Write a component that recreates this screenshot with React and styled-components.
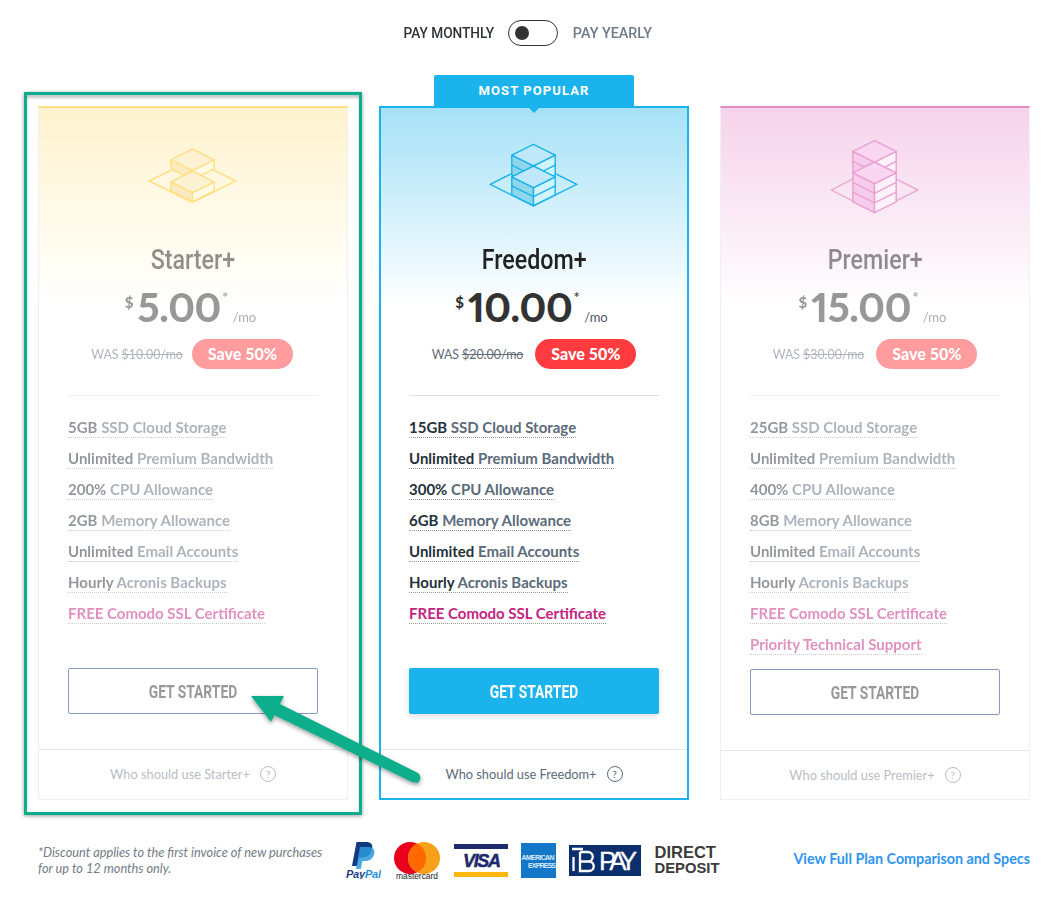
import React from "react";
import styled, { createGlobalStyle } from "styled-components";

const plans = [
  {
    name: "Starter+", price: "5.00", was: "$10.00/mo", accent: "#ffe082", line: "#ffe082", tint: "#fff3cf", icon: "starter", tight: true,
    faces: ["#fdf1d4", "#fbe9c0", "#fff9e8"],
    features: [["5GB", "SSD Cloud Storage"], ["Unlimited", "Premium Bandwidth"], ["200%", "CPU Allowance"], ["2GB", "Memory Allowance"], ["Unlimited", "Email Accounts"], ["Hourly", "Acronis Backups"]],
  },
  {
    name: "Freedom+", price: "10.00", was: "$20.00/mo", accent: "#1ab3ec", line: "#1ab3ec", tint: "#a6e1f7", icon: "freedom", featured: true,
    faces: ["#bfe9fa", "#8fd6ea", "#d2f4fd"],
    features: [["15GB", "SSD Cloud Storage"], ["Unlimited", "Premium Bandwidth"], ["300%", "CPU Allowance"], ["6GB", "Memory Allowance"], ["Unlimited", "Email Accounts"], ["Hourly", "Acronis Backups"]],
  },
  {
    name: "Premier+", price: "15.00", was: "$30.00/mo", accent: "#e58bc6", line: "#e8a0d2", tint: "#f5d3ea", icon: "premier", priority: true,
    faces: ["#fbd6f0", "#f5cdea", "#fff1fb"],
    features: [["25GB", "SSD Cloud Storage"], ["Unlimited", "Premium Bandwidth"], ["400%", "CPU Allowance"], ["8GB", "Memory Allowance"], ["Unlimited", "Email Accounts"], ["Hourly", "Acronis Backups"]],
  },
];

const icons = {
  starter: { plate: [44.5, 41, 21.5], cubes: [[44.5, 9, 9, 1], [44.5, 31, 9, 1]] },
  freedom: { plate: [44.5, 44.3, 21.7], cubes: [[44.5, 4.3, 20, 2], [44.5, 26, 18, 2]] },
  premier: { plate: [44.5, 50, 22], cubes: [[44.5, 0.6, 20, 2], [44.5, 22, 29, 3]] },
};

const GlobalStyle = createGlobalStyle`
  html, body { margin: 0; padding: 0; background: #fff; }
  body { font-family: "Lato", "Liberation Sans", sans-serif; }
`;

const Page = styled.div`
  position: relative;
  width: 1064px;
  height: 912px;
  overflow: hidden;
  background: #fff;
`;

const Toggle = styled.div`
  display: flex;
  justify-content: center;
  align-items: center;
  gap: 14.5px;
  padding: 19px 0 0 0;
  margin-left: -9px;
  height: 27px;
`;

const Narrow = styled.span`
  display: inline-block;
  font-family: "Roboto", sans-serif;
  transform: scaleX(${(p) => p.$scale});
  margin: 0 ${(p) => p.$trim}px;
`;

const ToggleLabel = styled(Narrow)`
  font-size: 15px;
  font-weight: 500;
  color: ${(p) => (p.$off ? "#6f7b88" : "#2e3338")};
`;

const Switch = styled.div`
  width: 50px;
  height: 26px;
  box-sizing: border-box;
  border: 1px solid #333;
  border-radius: 13px;
  padding: 5px 0 0 6px;
`;

const Knob = styled.div`
  width: 14px;
  height: 14px;
  border-radius: 50%;
  background: #333;
`;

const Plans = styled.div`
  display: flex;
  gap: 31px;
  margin: 60px 0 0 38px;
`;

const Card = styled.div`
  position: relative;
  width: 310px;
  height: 694px;
  box-sizing: border-box;
  display: flex;
  flex-direction: column;
  border: ${(p) => (p.$featured ? `2px solid ${p.$accent}` : "1px solid #eef0f3")};
  border-top: 2px solid ${(p) => p.$accent};
  background: linear-gradient(${(p) => p.$tint} 0, #fff 200px);
`;

const Badge = styled.div`
  position: absolute;
  top: -33px;
  left: 53px;
  width: 200px;
  height: 33px;
  border-radius: 2px 2px 0 0;
  background: #1ab3ec;
  color: #fff;
  font-family: "Roboto", sans-serif;
  font-size: 13px;
  font-weight: 700;
  letter-spacing: 1.1px;
  line-height: 31px;
  text-align: center;
  &::after {
    content: "";
    position: absolute;
    left: 95px;
    top: 33px;
    border: 5px solid transparent;
    border-top-color: #1ab3ec;
    border-bottom: 0;
  }
`;

const IconWrap = styled.div`
  height: 98px;
  margin-top: 32px;
  display: flex;
  justify-content: center;
`;

const Body = styled.div`
  flex: 1;
  display: flex;
  flex-direction: column;
  padding: 0 ${(p) => (p.$featured ? "28px" : "29px")};
  opacity: ${(p) => (p.$featured ? 1 : 0.5)};
`;

const Name = styled.h2`
  margin: 0;
  padding-top: 3px;
  height: 34px;
  text-align: center;
  font-size: 28px;
  line-height: 34px;
  font-weight: 500;
  color: #222;
`;

const Price = styled.div`
  display: flex;
  justify-content: center;
  align-items: flex-start;
  margin: 9px 0 0 -5px;
  height: 45px;
  color: #333;
  font-weight: 700;
`;

const Dollar = styled.span`
  font-size: 15px;
  font-weight: 900;
  margin: 9px 4px 0 0;
`;

const Amount = styled.span`
  font-size: 40px;
  line-height: 46px;
  font-weight: 900;
  font-feature-settings: "pnum";
  letter-spacing: -0.4px;
`;

const Star = styled.span`
  font-size: 16px;
  font-weight: 400;
  margin: 3px 4px 0 1px;
`;

const Per = styled.span`
  font-size: 13px;
  font-weight: 400;
  color: #556;
  margin-top: 25px;
`;

const Savings = styled.div`
  display: flex;
  justify-content: center;
  align-items: center;
  gap: ${(p) => (p.$tight ? "9px" : "12px")};
  margin: 10px 0 0 ${(p) => (p.$tight ? "-2px" : "0")};
  height: 30px;
  font-size: 12.4px;
  color: #5f6b78;
`;

const Struck = styled.s`
  margin-left: 3px;
`;

const Pill = styled.span`
  width: 101px;
  height: 30px;
  border-radius: 15px;
  background: #ff3b3f;
  color: #fff;
  font-size: 16px;
  font-weight: 900;
  line-height: 30px;
  text-align: center;
`;

const Rule = styled.hr`
  width: 100%;
  margin: 26px 0 0;
  border: 0;
  border-top: 1px solid #dfe3e8;
`;

const Features = styled.ul`
  list-style: none;
  margin: 0;
  padding: 16px 0 0;
  height: ${(p) => (p.$long ? "257px" : "256px")};
`;

const Feature = styled.li`
  height: 31px;
  line-height: 31px;
  font-size: 15px;
  font-weight: 700;
  color: ${(p) => (p.$pink ? "#c2247f" : "#5b6a7a")};
`;

const Dotted = styled.span`
  border-bottom: 1px dotted #999;
  padding-bottom: 1px;
`;

const Strong = styled.span`
  color: #24303a;
`;

const Cta = styled.a`
  display: block;
  height: 46px;
  box-sizing: border-box;
  border-radius: 2px;
  border: 1px solid ${(p) => (p.$filled ? "#1ab3ec" : "#123a78")};
  background: ${(p) => (p.$filled ? "#1ab3ec" : "#fff")};
  box-shadow: ${(p) => (p.$filled ? "0 2px 6px rgba(0,0,0,.15)" : "none")};
  color: ${(p) => (p.$filled ? "#fff" : "#333")};
  font-size: 17.5px;
  font-weight: 700;
  line-height: 45px;
  text-align: center;
`;

const CtaText = styled(Narrow)`
  font-weight: 700;
`;

const WhoFor = styled.div`
  height: ${(p) => (p.$short ? "49px" : "50px")};
  padding-bottom: ${(p) => (p.$short ? "1px" : "2px")};
  box-sizing: border-box;
  border-top: 1px solid #e4e7ea;
  display: flex;
  justify-content: center;
  align-items: center;
  gap: 10px;
  font-size: 12.8px;
  color: ${(p) => (p.$featured ? "#5b6a7a" : "#b9bec6")};
`;

const Help = styled.span`
  width: 14px;
  height: 14px;
  border: 1px solid currentColor;
  border-radius: 50%;
  font-size: 10px;
  line-height: 14px;
  text-align: center;
`;

const Footer = styled.div`
  display: flex;
  align-items: center;
  margin: 40px 34px 0 38px;
`;

const Note = styled.p`
  margin: 0;
  width: 294px;
  font-size: 12.75px;
  line-height: 16px;
  font-style: italic;
  color: #737b85;
`;

const Logos = styled.div`
  display: flex;
  align-items: center;
  gap: 13.3px;
  margin-left: 14px;
`;

const DirectDeposit = styled.div`
  width: 64px;
  font-family: "Liberation Sans", sans-serif;
  font-size: 14.8px;
  line-height: 16px;
  font-weight: 700;
  color: #3a3a3a;
  text-align: justify;
  text-align-last: justify;
`;

const DirectWord = styled.span`
  display: block;
  font-size: 16.5px;
`;

const ComparisonLink = styled.a`
  margin-left: auto;
  padding-bottom: 3px;
  font-size: 14.3px;
  font-weight: 700;
  color: #2f95f0;
`;

const Highlight = styled.div`
  position: absolute;
  left: 24px;
  top: 92px;
  width: 338px;
  height: 723px;
  box-sizing: border-box;
  border: 3px solid #0aae8c;
  box-shadow: 0 1px 4px rgba(0,0,0,.4), inset 0 3px 3px rgba(0,0,0,.22);
  pointer-events: none;
`;

const ArrowSvg = styled.svg`
  position: absolute;
  left: 240px;
  top: 685px;
  overflow: visible;
`;

const Cube = ({ x, y, h, tiers, line, faces, w = 21.7, d = 10.8 }) => (
  <g stroke={line} strokeWidth="1.4" strokeLinejoin="round">
    <path d={`M${x} ${y + d * 2}L${x - w} ${y + d}V${y + d + h}L${x} ${y + d * 2 + h}Z`} fill={faces[1]} />
    <path d={`M${x} ${y + d * 2}L${x + w} ${y + d}V${y + d + h}L${x} ${y + d * 2 + h}Z`} fill={faces[2]} />
    <path d={`M${x} ${y}L${x + w} ${y + d}L${x} ${y + d * 2}L${x - w} ${y + d}Z`} fill={faces[0]} />
    {Array.from({ length: tiers - 1 }, (_, i) => {
      const off = ((i + 1) * h) / tiers;
      return <path key={i} fill="none" d={`M${x - w} ${y + d + off}L${x} ${y + d * 2 + off}L${x + w} ${y + d + off}`} />;
    })}
  </g>
);

const PlanIcon = ({ kind, line, faces }) => {
  const { plate, cubes } = icons[kind];
  const [cx, cy, hh] = plate;
  return (
    <svg width="90" height="76" viewBox="0 0 90 76">
      <path d={`M${cx} ${cy - hh}L${cx + 43.2} ${cy}L${cx} ${cy + hh}L${cx - 43.2} ${cy}Z`} fill="none" stroke={line} strokeWidth="1.4" />
      {cubes.map(([x, y, h, tiers]) => (
        <Cube key={y} x={x} y={y} h={h} tiers={tiers} line={line} faces={faces} />
      ))}
    </svg>
  );
};

const PayPal = () => (
  <svg width="35" height="38" viewBox="0 0 35 38">
    <path d="M10.500 1h9c5.500 0 7.500 2.500 6.700 7-1 5.500-4.700 8.500-10 8.500h-3.200l-1.500 8.500H6Z" fill="#123a80" />
    <path d="M14 6h7.500c5.500 0 7.500 2.500 6.800 6.500-1 5-4.500 7.500-9 7.500h-3l-1.500 8H10Z" fill="#2a9bdc" fillOpacity=".85" />
    <text x="17.500" y="36.500" textAnchor="middle" fontFamily="Liberation Sans" fontStyle="italic" fontWeight="700" fontSize="11" textLength="35">
      <tspan fill="#1d3f80">Pay</tspan><tspan fill="#2a8fd8">Pal</tspan>
    </text>
  </svg>
);

const Mastercard = () => (
  <svg width="46" height="40" viewBox="0 -2 46 40">
    <circle cx="16" cy="16" r="16" fill="#e8001c" />
    <circle cx="30" cy="16" r="16" fill="#f9a01b" />
    <path d="M23 1.600a16 16 0 0 1 0 28.800a16 16 0 0 1 0-28.800Z" fill="#ff6a00" />
    <text x="23" y="37" textAnchor="middle" fontFamily="Liberation Sans" fontSize="8.500" fill="#222" textLength="42">mastercard</text>
  </svg>
);

const Visa = () => (
  <svg width="54" height="33" viewBox="0 0 54 33">
    <rect width="54" height="5" fill="#1d2a6b" />
    <rect y="28" width="54" height="5" fill="#fbb70e" />
    <text x="28" y="23" textAnchor="middle" fontFamily="Liberation Sans" fontStyle="italic" fontWeight="700" fontSize="18" fill="#1d2a6b" stroke="#1d2a6b" strokeWidth=".5" textLength="38">VISA</text>
  </svg>
);

const Amex = () => (
  <svg width="35" height="35" viewBox="0 0 35 35">
    <rect width="35" height="35" fill="#1478c8" />
    <text x="0.500" y="17" fontFamily="Liberation Sans" fontWeight="700" fontSize="7" fill="#d8ecf9" textLength="33">AMERICAN</text>
    <text x="7" y="25" fontFamily="Liberation Sans" fontWeight="700" fontSize="7" fill="#d8ecf9" textLength="28">EXPRESS</text>
  </svg>
);

const Bpay = () => (
  <svg width="72" height="31" viewBox="0 0 72 31">
    <rect width="72" height="31" fill="#0a2f6c" />
    <path d="M4.500 12V26M3 4H14M11 7V26H20a4.500 4.500 0 0 0 0-9.500H11M11 16.500H19a4.500 4.500 0 0 0 0-9.500H11" fill="none" stroke="#fff" strokeWidth="2.300" />
    <text x="30" y="25" fontFamily="Liberation Sans" fontSize="26" fill="#fff" stroke="#fff" strokeWidth=".3" textLength="38">PAY</text>
  </svg>
);

const Plan = ({ plan }) => {
  const { name, price, was, accent, line, tint, icon, faces, featured, priority, tight, features } = plan;
  return (
    <Card $accent={accent} $tint={tint} $featured={featured}>
      {featured && <Badge>MOST POPULAR</Badge>}
      <IconWrap>
        <PlanIcon kind={icon} line={line} faces={faces} />
      </IconWrap>
      <Body $featured={featured}>
        <Name>
          <Narrow $scale={0.83} $trim={-10}>{name}</Narrow>
        </Name>
        <Price>
          <Dollar>$</Dollar>
          <Amount>{price}</Amount>
          <Star>*</Star>
          <Per>/mo</Per>
        </Price>
        <Savings $tight={tight}>
          <span>WAS<Struck>{was}</Struck></span>
          <Pill>Save 50%</Pill>
        </Savings>
        <Rule />
        <Features $long={priority}>
          {features.map(([lead, rest]) => (
            <Feature key={lead + rest}>
              <Dotted><Strong>{lead}</Strong> {rest}</Dotted>
            </Feature>
          ))}
          <Feature $pink><Dotted>FREE Comodo SSL Certificate</Dotted></Feature>
          {priority && <Feature $pink><Dotted>Priority Technical Support</Dotted></Feature>}
        </Features>
        <Cta $filled={featured}>
          <CtaText $scale={0.79} $trim={-10}>GET STARTED</CtaText>
        </Cta>
      </Body>
      <WhoFor $featured={featured} $short={featured || priority}>
        Who should use {name}
        <Help>?</Help>
      </WhoFor>
    </Card>
  );
};

export default function App() {
  return (
    <Page>
      <GlobalStyle />
      <Toggle>
        <ToggleLabel $scale={0.91} $trim={-4.5}>PAY MONTHLY</ToggleLabel>
        <Switch><Knob /></Switch>
        <ToggleLabel $off $scale={0.955} $trim={-2}>PAY YEARLY</ToggleLabel>
      </Toggle>
      <Plans>
        {plans.map((plan) => <Plan key={plan.name} plan={plan} />)}
      </Plans>
      <Footer>
        <Note>*Discount applies to the first invoice of new purchases for up to 12 months only.</Note>
        <Logos>
          <PayPal />
          <Mastercard />
          <Visa />
          <Amex />
          <Bpay />
          <DirectDeposit><DirectWord>DIRECT</DirectWord>DEPOSIT</DirectDeposit>
        </Logos>
        <ComparisonLink>View Full Plan Comparison and Specs</ComparisonLink>
      </Footer>
      <Highlight />
      <ArrowSvg width="190" height="105" viewBox="0 0 190 105">
        <defs>
          <filter id="arrowShadow" x="-10%" y="-10%" width="120%" height="130%">
            <feDropShadow dx="0" dy="2" stdDeviation="2" floodOpacity=".4" />
          </filter>
        </defs>
        <g filter="url(#arrowShadow)">
          <path d="M36 21L38 18L178 88Q183 92 178 98L172 97L30 28Z" fill="#0aae8c" />
          <path d="M11 11H44L31 37Z" fill="#0aae8c" />
        </g>
      </ArrowSvg>
    </Page>
  );
}
